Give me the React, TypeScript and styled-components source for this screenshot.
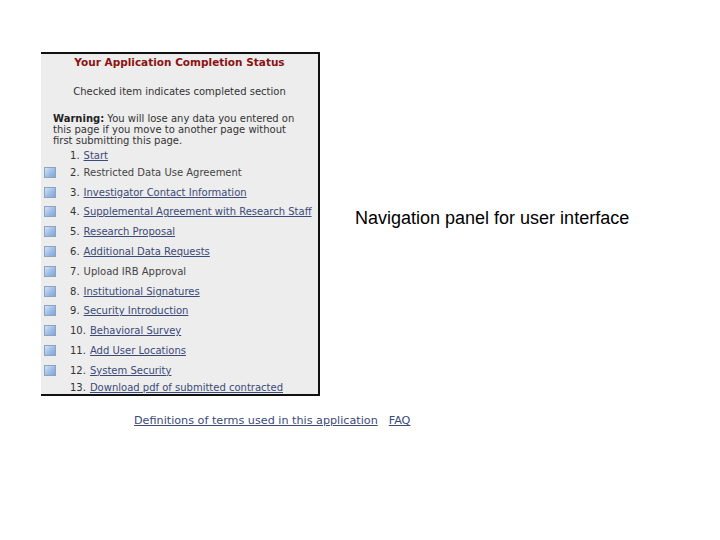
import React from 'react';
import styled, { createGlobalStyle } from 'styled-components';

const GlobalStyle = createGlobalStyle`
  html, body {
    margin: 0;
    padding: 0;
    background: #ffffff;
  }
`;

const Page = styled.div`
  width: 720px;
  height: 540px;
  padding: 52px 0 0 41px;
  box-sizing: border-box;
  font-family: "DejaVu Sans", Verdana, sans-serif;
`;

const TopRow = styled.div`
  display: flex;
  align-items: flex-start;
`;

const Panel = styled.div`
  width: 279px;
  box-sizing: border-box;
  background: #ededed;
  border-top: 2px solid #111;
  border-right: 2px solid #111;
  border-bottom: 2px solid #111;
  padding: 1px 0 0 0;
  color: #333;
  font-size: 10px;
`;

const Title = styled.div`
  text-align: center;
  font-weight: bold;
  font-size: 10.5px;
  color: #8b1212;
  line-height: 14px;
`;

const Note = styled.div`
  text-align: center;
  line-height: 14px;
  margin-top: 16px;
`;

const Warning = styled.p`
  margin: 15px 0 0 12px;
  line-height: 10.8px;
  padding-right: 12px;

  strong {
    color: #222;
  }
`;

const StepList = styled.ol`
  list-style: none;
  margin: 2px 0 0 0;
  padding: 0;
`;

const Step = styled.li<{ $box: boolean }>`
  display: flex;
  align-items: center;
  height: ${(p) => (p.$box ? '19.8px' : '14px')};
  padding-left: 3px;
`;

const Box = styled.span<{ $show: boolean }>`
  width: 12px;
  height: 11px;
  box-sizing: border-box;
  margin-right: 14px;
  flex-shrink: 0;
  border: 1px solid ${(p) => (p.$show ? '#8fa3bd' : 'transparent')};
  background: ${(p) => (p.$show ? 'linear-gradient(135deg, #d3e3f7 0%, #9dbde6 55%, #7ea6dc 100%)' : 'transparent')};
`;

const Num = styled.span`
  color: #333;
  margin-right: 4px;
`;

const StepLink = styled.a<{ $plain?: boolean }>`
  color: ${(p) => (p.$plain ? '#444' : '#3b4a78')};
  text-decoration: ${(p) => (p.$plain ? 'none' : 'underline')};
  white-space: nowrap;
`;

const Caption = styled.div`
  font-family: "Liberation Sans", Arial, sans-serif;
  font-size: 18px;
  color: #000;
  margin: 156px 0 0 35px;
`;

const Footer = styled.div`
  display: flex;
  gap: 11px;
  margin: 18px 0 0 93px;
  font-size: 11.2px;

  a {
    color: #3b4a78;
    text-decoration: underline;
  }
`;

const steps: { label: string; box: boolean; plain?: boolean }[] = [
  { label: 'Start', box: false },
  { label: 'Restricted Data Use Agreement', box: true, plain: true },
  { label: 'Investigator Contact Information', box: true },
  { label: 'Supplemental Agreement with Research Staff', box: true },
  { label: 'Research Proposal', box: true },
  { label: 'Additional Data Requests', box: true },
  { label: 'Upload IRB Approval', box: true, plain: true },
  { label: 'Institutional Signatures', box: true },
  { label: 'Security Introduction', box: true },
  { label: 'Behavioral Survey', box: true },
  { label: 'Add User Locations', box: true },
  { label: 'System Security', box: true },
  { label: 'Download pdf of submitted contracted', box: false },
];

const App: React.FC = () => {
  return (
    <>
      <GlobalStyle />
      <Page>
        <TopRow>
          <Panel>
            <Title>Your Application Completion Status</Title>
            <Note>Checked item indicates completed section</Note>
            <Warning>
              <strong>Warning:</strong> You will lose any data you entered on this page if you move to another page without first submitting this page.
            </Warning>
            <StepList>
              {steps.map((s, i) => (
                <Step key={s.label} $box={s.box}>
                  <Box $show={s.box} />
                  <Num>{i + 1}.</Num>
                  <StepLink href="#" $plain={s.plain}>{s.label}</StepLink>
                </Step>
              ))}
            </StepList>
          </Panel>
          <Caption>Navigation panel for user interface</Caption>
        </TopRow>
        <Footer>
          <a href="#">Definitions of terms used in this application</a>
          <a href="#">FAQ</a>
        </Footer>
      </Page>
    </>
  );
};

export default App;
